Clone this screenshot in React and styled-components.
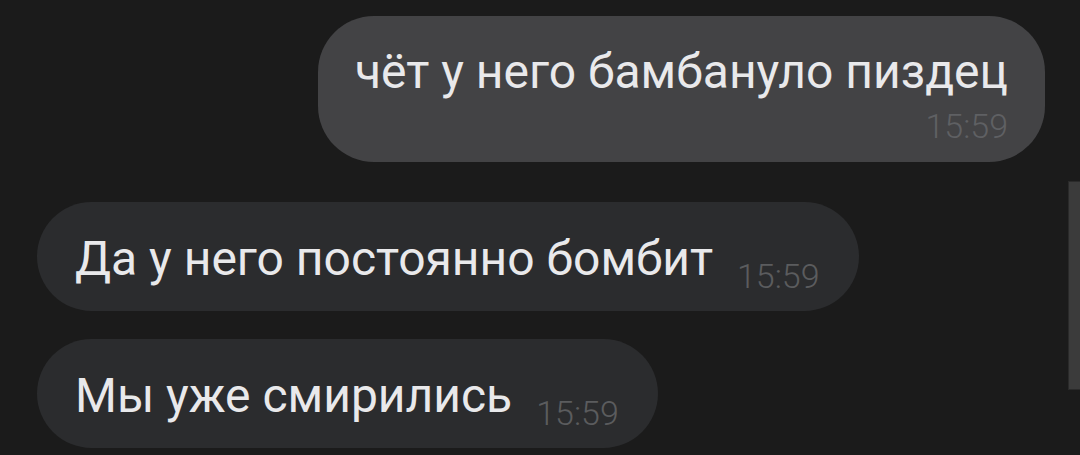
import React from 'react'
import styled, { createGlobalStyle } from 'styled-components'

const Global = createGlobalStyle`
html, body {
  margin:0;
  padding:0;
  background:#1b1b1b;
}
body {
  font-family: Roboto, "Noto Sans", "Liberation Sans", sans-serif;
}
`

const Screen = styled.div`
position:relative;
width:1080px;
height:455px;
overflow:hidden;
background:#1b1b1b;
display:flex;
flex-direction:column;
padding:16px 35px 0 37px;
box-sizing:border-box;
`

const Row = styled.div`
display:flex;
justify-content:${p => (p.$out ? 'flex-end' : 'flex-start')};
margin-bottom:${p => p.$gap}px;
`

const Bubble = styled.div`
background:${p => (p.$out ? '#434345' : '#2b2c2e')};
border-radius:56px;
display:flex;
flex-direction:${p => (p.$out ? 'column' : 'row')};
align-items:flex-end;
padding:${p => (p.$out ? '28px 37px 19px 37px' : '29px 39px 18px 38px')};
`

const Text = styled.div`
color:#e9e9eb;
font-size:48px;
line-height:56px;
white-space:nowrap;
margin-bottom:${p => (p.$out ? 0 : 6)}px;
align-self:${p => (p.$out ? 'flex-start' : 'auto')};
`

const Time = styled.span`
color:${p => (p.$out ? '#5f6063' : '#5b5c5e')};
font-size:34px;
font-weight:300;
line-height:34px;
margin-left:${p => (p.$out ? 0 : 24)}px;
margin-top:${p => (p.$out ? 9 : 0)}px;
`

const Scrollbar = styled.div`
position:absolute;
right:0;
top:181px;
width:11px;
height:207px;
background:#3b3b3b;
border:1px solid #2a2a2a;
border-right:none;
`

const messages = [
  { out: true, text: 'чёт у него бамбануло пиздец', time: '15:59', gap: 40 },
  { out: false, text: 'Да у него постоянно бомбит', time: '15:59', gap: 28 },
  { out: false, text: 'Мы уже смирились', time: '15:59', gap: 0 },
]

const App = () => {
  return (
    <>
      <Global />
      <Screen>
        {messages.map((m, i) => (
          <Row key={i} $out={m.out} $gap={m.gap}>
            <Bubble $out={m.out}>
              <Text $out={m.out}>{m.text}</Text>
              <Time $out={m.out}>{m.time}</Time>
            </Bubble>
          </Row>
        ))}
        <Scrollbar />
      </Screen>
    </>
  )
}

export default App
